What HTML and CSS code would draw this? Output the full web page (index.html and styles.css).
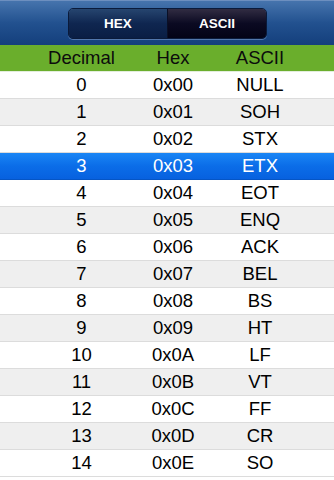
FILE: index.html
```html
<!DOCTYPE html>
<html lang="en">
<head>
    <meta charset="UTF-8">
    <title>ASCII Table</title>
    <link rel="stylesheet" href="styles.css">
</head>
<body>
<div class="navbar">
    <div class="segmented">
        <div class="segment">HEX</div>
        <div class="segment segment-active">ASCII</div>
    </div>
</div>
<div class="table-head row">
    <div class="cell">Decimal</div>
    <div class="cell">Hex</div>
    <div class="cell">ASCII</div>
</div>
<div class="table">
    <div class="row"><div class="cell">0</div><div class="cell">0x00</div><div class="cell">NULL</div></div>
    <div class="row odd"><div class="cell">1</div><div class="cell">0x01</div><div class="cell">SOH</div></div>
    <div class="row"><div class="cell">2</div><div class="cell">0x02</div><div class="cell">STX</div></div>
    <div class="row selected"><div class="cell">3</div><div class="cell">0x03</div><div class="cell">ETX</div></div>
    <div class="row"><div class="cell">4</div><div class="cell">0x04</div><div class="cell">EOT</div></div>
    <div class="row odd"><div class="cell">5</div><div class="cell">0x05</div><div class="cell">ENQ</div></div>
    <div class="row"><div class="cell">6</div><div class="cell">0x06</div><div class="cell">ACK</div></div>
    <div class="row odd"><div class="cell">7</div><div class="cell">0x07</div><div class="cell">BEL</div></div>
    <div class="row"><div class="cell">8</div><div class="cell">0x08</div><div class="cell">BS</div></div>
    <div class="row odd"><div class="cell">9</div><div class="cell">0x09</div><div class="cell">HT</div></div>
    <div class="row"><div class="cell">10</div><div class="cell">0x0A</div><div class="cell">LF</div></div>
    <div class="row odd"><div class="cell">11</div><div class="cell">0x0B</div><div class="cell">VT</div></div>
    <div class="row"><div class="cell">12</div><div class="cell">0x0C</div><div class="cell">FF</div></div>
    <div class="row odd"><div class="cell">13</div><div class="cell">0x0D</div><div class="cell">CR</div></div>
    <div class="row"><div class="cell">14</div><div class="cell">0x0E</div><div class="cell">SO</div></div>
    <div class="row"></div>
</div>
</body>
</html>
```
FILE: styles.css
```css
html, body {
    margin: 0;
    padding: 0;
    height: 480px;
    overflow: hidden;
    background: #fff;
    font-family: "Liberation Sans", Arial, sans-serif;
}

.navbar {
    height: 45px;
    box-sizing: border-box;
    border-top: 1px solid #6d8fbf;
    background: linear-gradient(#4674ad, #22518f 50%, #143f7c);
    display: flex;
    justify-content: center;
    align-items: flex-start;
    padding-top: 7px;
}

.segmented {
    width: 197px;
    height: 29px;
    margin-left: 1px;
    display: flex;
    border: 1px solid #0a1a3a;
    border-radius: 5px;
    overflow: hidden;
    box-shadow: 0 1px 0 rgba(140, 170, 215, 0.5);
}

.segment {
    flex: 1;
    display: flex;
    justify-content: center;
    align-items: center;
    color: #fff;
    font-weight: bold;
    font-size: 13.5px;
    background: linear-gradient(#26456f, #0f2650 50%, #0a1e44);
}

.segment-active {
    background: linear-gradient(#312c42, #0b0a22 50%, #030316);
    border-left: 1px solid #0a1026;
}

.row {
    display: grid;
    grid-template-columns: 91px 92px 82px;
    padding-left: 36px;
    height: 27px;
    box-sizing: border-box;
    align-items: center;
    font-size: 18.5px;
    color: #000;
    border-bottom: 1px solid #dcdcdc;
}

.cell {
    text-align: center;
    line-height: 26px;
}

.table-head {
    background: #6aae2c;
    color: #0c0c0c;
    border-bottom: 1px solid #e3eedc;
}

.odd {
    background: #efefef;
}

.selected {
    background: linear-gradient(#1a86f5, #0b6de8 50%, #0761df);
    color: #fff;
    border-bottom-color: #0555c5;
}
```
